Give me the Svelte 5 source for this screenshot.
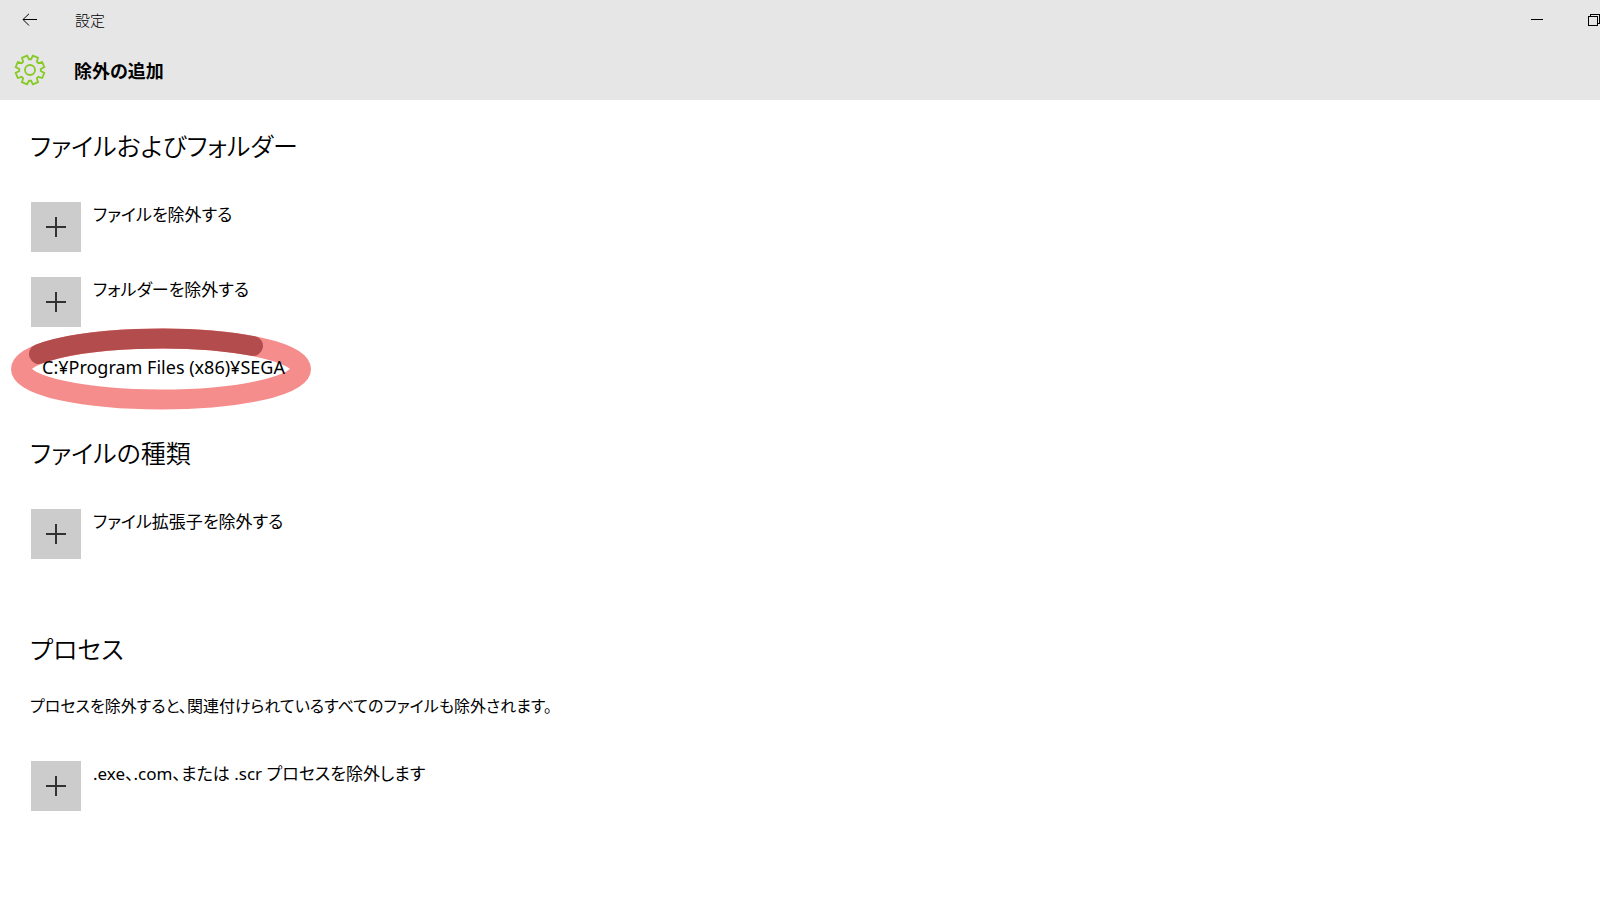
<script lang="ts">
  interface Section {
    title: string
    note?: string
    actions: string[]
    entries: string[]
  }

  const sections: Section[] = [
    {
      title: 'ファイルおよびフォルダー',
      actions: ['ファイルを除外する', 'フォルダーを除外する'],
      entries: ['C:¥Program Files (x86)¥SEGA']
    },
    {
      title: 'ファイルの種類',
      actions: ['ファイル拡張子を除外する'],
      entries: []
    },
    {
      title: 'プロセス',
      note: 'プロセスを除外すると、関連付けられているすべてのファイルも除外されます。',
      actions: ['.exe、.com、または .scr プロセスを除外します'],
      entries: []
    }
  ]

  // Outline of the gear, teeth spread evenly around the centre
  function gearPath(teeth: number, outer: number, inner: number): string {
    const step = (Math.PI * 2) / teeth
    const points: string[] = []
    for (let i = 0; i < teeth; i++) {
      const mid = -Math.PI / 2 + step * (i + 0.5)
      const corners = [
        [inner, -0.38],
        [outer, -0.24],
        [outer, 0.24],
        [inner, 0.38]
      ]
      for (const [r, k] of corners) {
        const a = mid + step * k
        points.push(`${(16 + r * Math.cos(a)).toFixed(2)} ${(16 + r * Math.sin(a)).toFixed(2)}`)
      }
    }
    return `M${points.join('L')}Z`
  }

  const gear = gearPath(8, 14.6, 10.8)
</script>

<div class="window">
  <header>
    <div class="titlebar">
      <button class="back" aria-label="戻る">
        <svg width="16" height="14" viewBox="0 0 16 14">
          <path d="M7 .8 1 6.500l6 6M1 6.500h14" />
        </svg>
      </button>
      <span class="app-name">設定</span>
      <div class="window-buttons">
        <button class="minimize" aria-label="最小化">
          <svg width="12" height="12" viewBox="0 0 12 12" shape-rendering="crispEdges">
            <path d="M0 5.500h12" />
          </svg>
        </button>
        <button class="restore" aria-label="元に戻す">
          <svg width="12" height="12" viewBox="0 0 12 12" shape-rendering="crispEdges">
            <path d="M.5 2.500h9v9h-9zM2.500 2.500v-2h9v9h-2" />
          </svg>
        </button>
      </div>
    </div>
    <div class="heading">
      <svg class="gear" width="32" height="32" viewBox="0 0 32 32">
        <path d={gear} />
        <circle cx="16" cy="16" r="5" />
      </svg>
      <h1>除外の追加</h1>
    </div>
  </header>

  <main>
    {#each sections as section}
      <section>
        <h2>{section.title}</h2>
        {#if section.note}
          <p class="note">{section.note}</p>
        {/if}
        <div class="actions">
          {#each section.actions as action}
            <button class="add">
              <span class="plus">
                <svg width="20" height="20" viewBox="0 0 20 20" shape-rendering="crispEdges">
                  <path d="M0 10h20M10 0v20" />
                </svg>
              </span>
              <span class="label">{action}</span>
            </button>
          {/each}
        </div>
        {#each section.entries as entry}
          <div class="entry">
            <svg class="marker" width="304" height="84" viewBox="0 0 304 84">
              <ellipse cx="152" cy="42" rx="140" ry="30.500" />
              <path d="M30 27A140 30.500 0 0 1 244 19" />
            </svg>
            <span class="path">{entry}</span>
          </div>
        {/each}
      </section>
    {/each}
  </main>
</div>

<style>
  :global(body) {
    margin: 0;
    background: #fff;
  }

  .window {
    min-height: 100vh;
    overflow-x: hidden;
    color: #000;
    font-family: 'Noto Sans', 'Noto Sans CJK JP', sans-serif;
    font-size: 17px;
    line-height: 26px;
    font-feature-settings: 'palt';
  }

  button {
    padding: 0;
    border: 0;
    background: none;
    color: inherit;
    font: inherit;
    font-feature-settings: inherit;
    text-align: left;
  }

  svg {
    display: block;
    fill: none;
    stroke: #000;
  }

  header {
    background: #e6e6e6;
  }

  .titlebar {
    display: flex;
    align-items: center;
    height: 40px;
  }

  .back {
    display: flex;
    align-items: center;
    justify-content: center;
    width: 60px;
    height: 40px;
  }

  .app-name {
    margin-left: 15px;
    font-size: 15px;
    font-weight: 300;
  }

  .window-buttons {
    display: flex;
    gap: 45px;
    margin-left: auto;
  }

  .heading {
    display: flex;
    align-items: center;
    gap: 28px;
    height: 60px;
    padding-left: 14px;
  }

  .gear {
    stroke: #86ca25;
    stroke-width: 1.8;
  }

  h1 {
    margin: 0;
    padding-top: 2px;
    font-size: 18px;
    font-weight: 700;
  }

  main {
    padding: 26px 30px;
  }

  section {
    margin-bottom: 53px;
  }

  section:nth-child(2) {
    margin-bottom: 70px;
  }

  h2 {
    margin: 0;
    font-size: 25px;
    font-weight: 350;
    line-height: 40px;
  }

  .note {
    margin: 24px 0 0;
    font-size: 16px;
  }

  .actions {
    display: flex;
    flex-direction: column;
    align-items: flex-start;
    gap: 25px;
    margin: 36px 0 0 1px;
  }

  .note + .actions {
    margin-top: 42px;
  }

  .add {
    display: flex;
    gap: 12px;
  }

  .plus {
    display: flex;
    align-items: center;
    justify-content: center;
    width: 50px;
    height: 50px;
    background: #ccc;
  }

  .plus svg {
    stroke: #333;
    stroke-width: 2;
  }

  .entry {
    position: relative;
    margin: 27px 0 0 12px;
    font-size: 18px;
  }

  .marker {
    position: absolute;
    top: -27px;
    left: -33px;
    stroke: #f58d8d;
    stroke-width: 20;
    stroke-linecap: round;
    pointer-events: none;
  }

  .marker path {
    stroke: #b34d4d;
  }

  .path {
    position: relative;
  }
</style>
